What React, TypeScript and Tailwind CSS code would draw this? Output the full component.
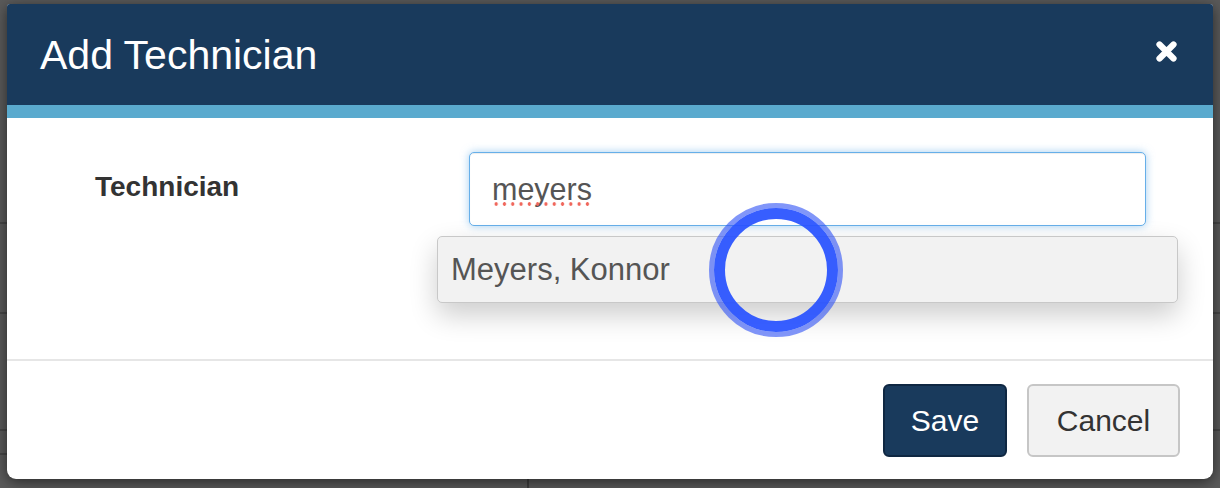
import React from "react";

export default function App() {
  const font = { fontFamily: '"Liberation Sans", Arial, Helvetica, sans-serif' };
  return (
    <div
      className="relative w-[1220px] h-[488px] overflow-hidden bg-[#5a5a5a]"
      style={font}
    >
      {/* page behind the overlay */}
      <div className="absolute inset-0">
        <div className="absolute left-0 w-full top-[222px] h-[2px] bg-[#464646]" />
        <div className="absolute left-0 w-full top-[312px] h-[2px] bg-[#464646]" />
        <div className="absolute left-0 w-full top-[429px] h-[2px] bg-[#464646]" />
        <div className="absolute left-0 w-[20px] top-[453px] h-[2px] bg-[#464646]" />
        <div className="absolute left-[527px] top-[470px] w-[2px] h-[30px] bg-[#3e3e3e]" />
      </div>

      <div className="relative pt-[4px] pl-[7px]">
        <div className="w-[1206px] h-[475px] bg-white rounded-t-[3px] rounded-b-[9px] overflow-hidden shadow-[0_3px_14px_rgba(0,0,0,0.55)] flex flex-col">
          {/* header */}
          <div className="h-[101px] shrink-0 bg-[#193a5c] flex items-start justify-between pl-[33px] pr-[35px]">
            <h1 className="pt-[31px] text-[41px] leading-[41px] text-white font-normal">
              Add Technician
            </h1>
            <button className="mt-[36px] w-[23px] h-[23px] flex items-center justify-center">
              <svg width="23" height="23" viewBox="0 0 23 23">
                <path
                  d="M4.5 4.5 L18.5 18.5 M18.5 4.5 L4.5 18.5"
                  stroke="#ffffff"
                  strokeWidth="6.2"
                  strokeLinecap="round"
                  fill="none"
                />
              </svg>
            </button>
          </div>
          <div className="h-[13px] shrink-0 bg-[#5aaace]" />

          {/* body */}
          <div className="relative h-[241px] shrink-0 pt-[34px] flex">
            <div className="w-[462px] shrink-0 pl-[88px] pt-[21px]">
              <label className="block text-[28px] leading-[28px] font-bold text-[#333333]">
                Technician
              </label>
            </div>
            <div className="w-[677px] h-[74px] rounded-[5px] border border-[#66afe9] bg-white shadow-[inset_0_1px_1px_rgba(0,0,0,0.075),0_0_8px_rgba(102,175,233,0.6)] flex items-center pl-[22px]">
              <span className="relative text-[30.5px] leading-[30px] text-[#555555]">
                meyers
                <span className="absolute left-0 right-0 top-[calc(100%-2px)] h-[4px] bg-[radial-gradient(circle,#f0675c_1.5px,transparent_2px)] bg-[length:8.3px_4px]" />
              </span>
            </div>

            {/* autocomplete menu */}
            <div className="absolute left-[430px] top-[118px] w-[741px] h-[67px] rounded-[5px] border border-[#c8c8c8] bg-[#f2f2f2] shadow-[0_12px_28px_rgba(0,0,0,0.2)] flex items-center pl-[13px]">
              <span className="text-[31px] leading-[30px] text-[#555555]">
                Meyers, Konnor
              </span>
            </div>
          </div>

          <div className="h-[2px] shrink-0 bg-[#e6e6e6]" />

          {/* footer */}
          <div className="flex justify-end gap-[20px] pt-[23px] pr-[33px]">
            <button className="h-[73px] w-[124px] rounded-[6px] border-2 border-[#0f2742] bg-[#193a5c] text-white text-[30px] leading-[30px]">
              Save
            </button>
            <button className="h-[73px] w-[153px] rounded-[6px] border-2 border-[#c6c6c6] bg-[#f2f2f2] text-[#333333] text-[30px] leading-[30px]">
              Cancel
            </button>
          </div>
        </div>
      </div>

      {/* touch indicator */}
      <svg
        className="absolute left-[706px] top-[200px] pointer-events-none"
        width="140"
        height="140"
        viewBox="0 0 140 140"
      >
        <circle cx="70" cy="70" r="64.5" fill="none" stroke="rgba(45,80,245,0.6)" strokeWidth="5" />
        <circle cx="70" cy="70" r="56.5" fill="none" stroke="rgba(40,82,255,0.93)" strokeWidth="11" />
      </svg>
    </div>
  );
}
